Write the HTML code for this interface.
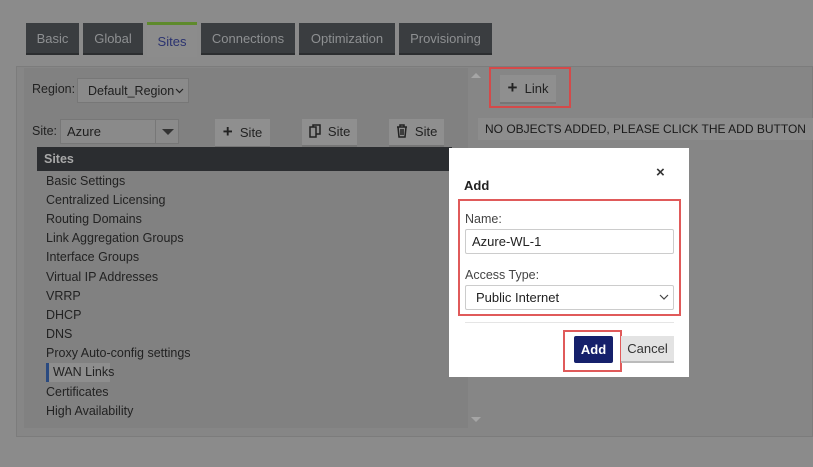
<!DOCTYPE html>
<html><head><style>
*{margin:0;padding:0;box-sizing:border-box}
body{width:813px;height:467px;background:#8b8b8b;font-family:"Liberation Sans",sans-serif;position:relative;overflow:hidden;color:#1e1e1e}
.a{position:absolute;white-space:nowrap}
.tab{position:absolute;top:23px;height:32px;background:#3a3d40;color:#8e9092;font-size:13px;line-height:32px;text-align:center;border-bottom:2px solid #2c2e30}
.btn{position:absolute;background:#8f8f8f;border-bottom:2px solid #767676;font-size:13px;line-height:26px;color:#222;text-align:center;white-space:nowrap}
.li{position:absolute;left:46px;font-size:12.5px;color:#222;white-space:nowrap}
</style></head><body>
<div class="tab" style="left:26px;width:53px">Basic</div>
<div class="tab" style="left:83px;width:60px">Global</div>
<div class="a" style="left:147px;top:22px;width:50px;height:3px;background:#5e8a2c"></div>
<div class="a" style="left:147px;top:25px;width:50px;height:32px;background:#8c8c8c;color:#2b3370;font-size:13px;line-height:34px;text-align:center">Sites</div>
<div class="tab" style="left:201px;width:94px">Connections</div>
<div class="tab" style="left:299px;width:96px">Optimization</div>
<div class="tab" style="left:399px;width:93px">Provisioning</div>

<div class="a" style="left:16px;top:66px;width:797px;height:371px;background:#868686;border:1px solid #7c7c7c"></div>
<div class="a" style="left:24px;top:68px;width:444px;height:360px;background:#818181"></div>
<div class="a" style="left:471px;top:73px;width:0;height:0;border:5px solid transparent;border-bottom:5px solid #a5a5a5;border-top:0"></div>
<div class="a" style="left:471px;top:417px;width:0;height:0;border:5px solid transparent;border-top:5px solid #a5a5a5;border-bottom:0"></div>

<div class="a" style="left:32px;top:82px;font-size:12.5px;color:#222">Region:</div>
<div class="a" style="left:77px;top:78px;width:112px;height:25px;background:#8a8a8a;border:1px solid #777;font-size:12.5px;line-height:24px;padding-left:10px">Default_Region</div>
<svg class="a" style="left:175px;top:88px" width="9" height="6"><path d="M1 1l3.5 3.5 3.5-3.5" stroke="#222" fill="none" stroke-width="1.2"/></svg>
<div class="a" style="left:32px;top:124px;font-size:12.5px;color:#222">Site:</div>
<div class="a" style="left:60px;top:119px;width:119px;height:25px;background:#8a8a8a;border:1px solid #777;font-size:13px;line-height:24px;padding-left:6px">Azure</div>
<div class="a" style="left:155px;top:120px;width:1px;height:23px;background:#777"></div>
<div class="a" style="left:162px;top:129px;border:6px solid transparent;border-top:6px solid #333;border-bottom:0"></div>
<div class="btn" style="left:215px;top:119px;width:55px"><b style="font-size:17px">+</b>&nbsp; Site</div>
<div class="btn" style="left:302px;top:119px;width:55px"><svg width="12" height="14" viewBox="0 0 12 14" style="vertical-align:-2px"><path d="M1 3h6v10H1zM4 3V1h7v9H7" stroke="#222" stroke-width="1.5" fill="none"/></svg>&nbsp; Site</div>
<div class="btn" style="left:389px;top:119px;width:55px"><svg width="12" height="14" viewBox="0 0 12 14" style="vertical-align:-2px"><path d="M1 3h10M4 3V1h4v2M2 3l1 10h6l1-10M5 5v6M7 5v6" stroke="#222" stroke-width="1.5" fill="none"/></svg>&nbsp; Site</div>

<div class="a" style="left:37px;top:147px;width:415px;height:24px;background:#2b2d30;color:#a8a8a8;font-weight:bold;font-size:12.5px;line-height:24px;padding-left:7px">Sites</div>
<div class="li" style="top:174px">Basic Settings</div>
<div class="li" style="top:193px">Centralized Licensing</div>
<div class="li" style="top:212px">Routing Domains</div>
<div class="li" style="top:231px">Link Aggregation Groups</div>
<div class="li" style="top:250px">Interface Groups</div>
<div class="li" style="top:270px">Virtual IP Addresses</div>
<div class="li" style="top:289px">VRRP</div>
<div class="li" style="top:308px">DHCP</div>
<div class="li" style="top:327px">DNS</div>
<div class="li" style="top:346px">Proxy Auto-config settings</div>
<div class="a" style="left:46px;top:363px;width:64px;height:19px;background:#8e8e8e;border-left:3px solid #2a4a80"></div>
<div class="li" style="top:365px;left:53px">WAN Links</div>
<div class="li" style="top:385px">Certificates</div>
<div class="li" style="top:404px">High Availability</div>

<div class="a" style="left:489px;top:67px;width:82px;height:41px;border:2px solid #d44a4a"></div>
<div class="btn" style="left:500px;top:75px;width:56px"><b style="font-size:17px">+</b>&nbsp; Link</div>
<div class="a" style="left:478px;top:118px;width:335px;height:22px;background:#8d8d8d;font-size:12px;line-height:22px;color:#1a1a1a;padding-left:7px">NO OBJECTS ADDED, PLEASE CLICK THE ADD BUTTON</div>

<div class="a" style="left:449px;top:148px;width:240px;height:229px;background:#fff"></div>
<div class="a" style="left:656px;top:164px;font-size:15px;font-weight:bold;color:#333">&#215;</div>
<div class="a" style="left:464px;top:178px;font-size:13px;font-weight:bold;color:#222">Add</div>
<div class="a" style="left:458px;top:199px;width:223px;height:117px;border:2px solid #e05a5a"></div>
<div class="a" style="left:465px;top:212px;font-size:12.5px;color:#444">Name:</div>
<div class="a" style="left:465px;top:229px;width:209px;height:25px;border:1px solid #ccc;border-radius:2px;font-size:13px;line-height:23px;padding-left:6px;color:#222">Azure-WL-1</div>
<div class="a" style="left:465px;top:268px;font-size:12.5px;color:#444">Access Type:</div>
<div class="a" style="left:465px;top:285px;width:209px;height:25px;border:1px solid #ccc;border-radius:2px;font-size:13px;line-height:23px;padding-left:10px;color:#222">Public Internet</div>
<svg class="a" style="left:659px;top:294px" width="10" height="6"><path d="M1 1l4 4 4-4" stroke="#444" fill="none" stroke-width="1.2"/></svg>
<div class="a" style="left:465px;top:322px;width:209px;height:1px;background:#e5e5e5"></div>
<div class="a" style="left:563px;top:330px;width:59px;height:42px;border:2px solid #e05a5a"></div>
<div class="a" style="left:574px;top:336px;width:39px;height:27px;background:#15206b;color:#fff;font-weight:bold;font-size:13px;line-height:27px;text-align:center;border-radius:2px">Add</div>
<div class="a" style="left:621px;top:336px;width:53px;height:27px;background:#e3e3e3;border-bottom:2px solid #bbb;color:#333;font-size:13px;line-height:26px;text-align:center">Cancel</div>
</body></html>
